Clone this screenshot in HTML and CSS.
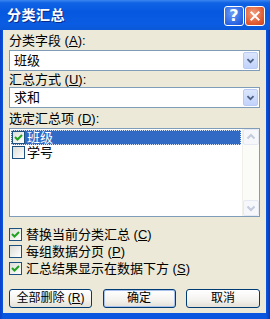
FILE: index.html
```html
<!DOCTYPE html>
<html lang="zh-CN">
<head>
    <meta charset="UTF-8">
    <title>分类汇总</title>
    <link rel="stylesheet" href="styles.css">
</head>
<body>
    <div class="window">
        <div class="titlebar">
            <span class="title">分类汇总</span>
            <div class="caption-btns">
                <span class="cap-btn help">?</span>
                <span class="cap-btn close">
                    <svg width="20" height="20" viewBox="0 0 20 20"><path d="M6 6l8 8M14 6l-8 8" stroke="#fff" stroke-width="2.2" stroke-linecap="square"/></svg>
                </span>
            </div>
        </div>

        <div class="client">
            <div class="label">分类字段 (<u>A</u>):</div>
            <div class="combo">
                <span class="combo-text">班级</span>
                <span class="drop"><svg width="15" height="17" viewBox="0 0 15 17"><path d="M4 7l3.5 3.5L11 7" fill="none" stroke="#4d6185" stroke-width="2"/></svg></span>
            </div>

            <div class="label tight">汇总方式 (<u>U</u>):</div>
            <div class="combo">
                <span class="combo-text">求和</span>
                <span class="drop"><svg width="15" height="17" viewBox="0 0 15 17"><path d="M4 7l3.5 3.5L11 7" fill="none" stroke="#4d6185" stroke-width="2"/></svg></span>
            </div>

            <div class="label">选定汇总项 (<u>D</u>):</div>
            <div class="listbox">
                <div class="items">
                    <div class="item selected">
                        <span class="check on"><svg width="11" height="11" viewBox="0 0 11 11"><path d="M2 5l2.5 2.5L9 3" fill="none" stroke="#21a121" stroke-width="2"/></svg></span>
                        <span>班级</span>
                    </div>
                    <div class="item">
                        <span class="check"></span>
                        <span>学号</span>
                    </div>
                </div>
                <div class="vscroll">
                    <span class="sbtn"><svg width="14" height="14" viewBox="0 0 14 14"><path d="M3.5 8.5L7 5l3.5 3.5" fill="none" stroke="#c3cbdc" stroke-width="2"/></svg></span>
                    <span class="track"></span>
                    <span class="sbtn"><svg width="14" height="14" viewBox="0 0 14 14"><path d="M3.5 5.5L7 9l3.5-3.5" fill="none" stroke="#c3cbdc" stroke-width="2"/></svg></span>
                </div>
            </div>

            <div class="options">
                <div class="opt">
                    <span class="check on"><svg width="11" height="11" viewBox="0 0 11 11"><path d="M2 5l2.5 2.5L9 3" fill="none" stroke="#21a121" stroke-width="2"/></svg></span>
                    <span>替换当前分类汇总 (<u>C</u>)</span>
                </div>
                <div class="opt">
                    <span class="check"></span>
                    <span>每组数据分页 (<u>P</u>)</span>
                </div>
                <div class="opt">
                    <span class="check on"><svg width="11" height="11" viewBox="0 0 11 11"><path d="M2 5l2.5 2.5L9 3" fill="none" stroke="#21a121" stroke-width="2"/></svg></span>
                    <span>汇总结果显示在数据下方 (<u>S</u>)</span>
                </div>
            </div>

            <div class="buttons">
                <span class="btn wide">全部删除 (<u>R</u>)</span>
                <span class="btn default">确定</span>
                <span class="btn cancel">取消</span>
            </div>
        </div>
    </div>
</body>
</html>
```

FILE: styles.css
```css
body {
    margin: 0;
    padding: 0;
    font-family: "Liberation Sans", "Noto Sans CJK SC", sans-serif;
    font-size: 13px;
    color: #000;
}
.window {
    width: 270px;
    height: 319px;
    box-sizing: border-box;
    display: flex;
    flex-direction: column;
    background: linear-gradient(90deg, #0a3fc8 0, #0a56de 3px, #0a56de 266px, #0838b8 270px);
    padding-bottom: 6px;
}

/* barra de titulo */
.titlebar {
    height: 30px;
    flex-shrink: 0;
    display: flex;
    align-items: center;
    justify-content: space-between;
    padding: 0 5px 0 7px;
    background: linear-gradient(#3b86f0 0, #0f62e4 3px, #0658e0 12px, #0a5ce2 24px, #0b58d8 30px);
}
.title {
    color: #fff;
    font-weight: bold;
    font-size: 14px;
    letter-spacing: 0.5px;
    line-height: 18px;
    text-shadow: 1px 1px 0 #0a2a8a;
}
.caption-btns {
    display: flex;
    gap: 1px;
    padding-top: 1px;
}
.cap-btn {
    width: 20px;
    height: 20px;
    box-sizing: border-box;
    border: 1px solid #fff;
    border-radius: 3px;
    display: flex;
    align-items: center;
    justify-content: center;
}
.help {
    background: radial-gradient(circle at 40% 35%, #6a9bf5, #2a64e4 70%, #1b4fc8);
    color: #fff;
    font-family: "DejaVu Sans", sans-serif;
    font-weight: bold;
    font-size: 16px;
    line-height: 18px;
}
.close {
    background: radial-gradient(circle at 40% 35%, #f0a080, #e05a30 65%, #c44420);
}

/* area do dialogo */
.client {
    flex: 1;
    margin: 0 4px 0 3px;
    padding: 0 6px;
    background: #ece9d8;
    display: flex;
    flex-direction: column;
}
.label {
    height: 20px;
    box-sizing: border-box;
    padding-top: 4px;
    line-height: 14px;
    white-space: nowrap;
}
.label.tight {
    height: 16px;
    padding-top: 2px;
}
u {
    text-decoration: underline;
}

.combo {
    height: 21px;
    box-sizing: border-box;
    border: 1px solid #7f9db9;
    background: #fff;
    display: flex;
    align-items: stretch;
}
.combo-text {
    flex: 1;
    padding-left: 4px;
    line-height: 19px;
}
.drop {
    width: 15px;
    margin: 1px;
    box-sizing: border-box;
    border: 1px solid #b9cbf3;
    border-radius: 2px;
    background: linear-gradient(#dbe6fd, #c2d3fb);
    display: flex;
    align-items: center;
    justify-content: center;
}

/* lista */
.listbox {
    height: 89px;
    box-sizing: border-box;
    border: 1px solid #7f9db9;
    background: #fff;
    display: flex;
}
.items {
    flex: 1;
    padding: 1px 1px 0 1px;
}
.item {
    height: 15px;
    display: flex;
    align-items: center;
    gap: 2px;
    padding-left: 1px;
    box-sizing: border-box;
    line-height: 15px;
}
.item.selected {
    background: #316ac5;
    color: #fff;
    outline: 1px dotted #d8e4f8;
    outline-offset: -1px;
}
.vscroll {
    width: 16px;
    display: flex;
    flex-direction: column;
    background: #fbfbf8;
    border-left: 1px solid #f1f0ea;
}
.sbtn {
    height: 16px;
    box-sizing: border-box;
    border: 1px solid #e6e9f2;
    border-radius: 2px;
    background: #f6f7fa;
    display: flex;
    align-items: center;
    justify-content: center;
}
.track {
    flex: 1;
}

/* caixas de selecao */
.check {
    width: 13px;
    height: 13px;
    box-sizing: border-box;
    border: 1px solid #1c5180;
    background: linear-gradient(135deg, #dcdcd7, #fff);
    display: inline-flex;
    align-items: center;
    justify-content: center;
    flex-shrink: 0;
}
.options {
    margin-top: 9px;
}
.opt {
    height: 17px;
    line-height: 17px;
    display: flex;
    align-items: center;
    gap: 4px;
    white-space: nowrap;
}

/* botoes */
.buttons {
    margin-top: 12px;
    display: flex;
    justify-content: space-between;
}
.btn {
    height: 19px;
    box-sizing: border-box;
    border: 1px solid #003c74;
    border-radius: 3px;
    background: linear-gradient(#fff, #f3f2ee 60%, #e4e0d6);
    display: flex;
    align-items: center;
    justify-content: center;
    font-size: 12px;
    line-height: 17px;
    white-space: nowrap;
}
.btn.wide {
    width: 83px;
}
.btn.default {
    width: 73px;
    box-shadow: inset 0 0 0 1px #a8c0ec;
}
.btn.cancel {
    width: 74px;
}
```
